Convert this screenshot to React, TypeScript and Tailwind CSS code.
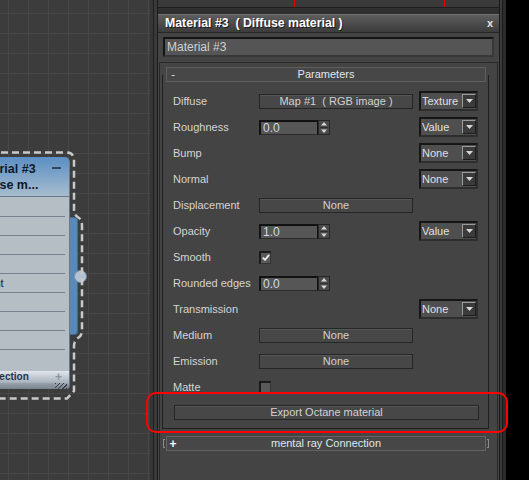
import React from 'react';

type RowDef = {
  label: string;
  control?: React.ReactNode;
  drop?: string;
};

const Btn: React.FC<{ label: string }> = ({ label }) => (
  <div className="flex h-[15px] w-[154px] items-center justify-center border border-[#262626] bg-[#474747] text-[11px] text-[#d2d2d2] shadow-[inset_0_1px_0_#575757]">
    <span className="whitespace-pre">{label}</span>
  </div>
);

const Spinner: React.FC<{ value: string }> = ({ value }) => (
  <div className="flex h-[15px] items-stretch">
    <div className="flex w-[59px] items-center border-l-2 border-t-2 border-r border-b border-[#121212] border-b-[#2c2c2c] bg-[#565656] pl-[2px] text-[12px] leading-none text-[#cfdae8]">
      {value}
    </div>
    <div className="flex w-[12px] flex-col items-center justify-center gap-[1px] border border-[#262626] bg-[#4a4a4a]">
      <svg width="6" height="4" viewBox="0 0 6 4">
        <polygon points="0,3.5 6,3.5 3,0" fill="#d8d8d8" />
      </svg>
      <div className="h-px w-[8px] bg-[#303030]" />
      <svg width="6" height="4" viewBox="0 0 6 4">
        <polygon points="0,0.5 6,0.5 3,4" fill="#d8d8d8" />
      </svg>
    </div>
  </div>
);

const Check: React.FC<{ on?: boolean }> = ({ on }) => (
  <div className="flex h-[13px] w-[12px] items-center justify-center border-l-2 border-t-2 border-r border-b border-[#1a1a1a] border-r-[#333333] border-b-[#333333] bg-[#5a5a5a]">
    {on && (
      <svg width="8" height="7" viewBox="0 0 8 7">
        <path d="M0.8 3.6 L3 5.8 L7.2 0.9" stroke="#ececec" strokeWidth="1.8" fill="none" />
      </svg>
    )}
  </div>
);

const Drop: React.FC<{ label: string }> = ({ label }) => (
  <div className="flex h-[20px] w-[59px] items-center border-2 border-[#161616] border-b-[#2e2e2e] border-r-[#2e2e2e] bg-[#4f4f4f] pl-[1px]">
    <span className="flex-1 text-[11px] leading-none text-[#e0e0e0]">{label}</span>
    <div className="flex h-[14px] w-[14px] items-center justify-center border border-[#9a9a9a] border-b-[#1e1e1e] border-r-[#1e1e1e] bg-[#3b3b3b]">
      <svg width="7" height="4" viewBox="0 0 7 4">
        <polygon points="0,0 7,0 3.5,4" fill="#d6d6d6" />
      </svg>
    </div>
  </div>
);

const rows: RowDef[] = [
  { label: 'Diffuse', control: <Btn label="Map #1  ( RGB image )" />, drop: 'Texture' },
  { label: 'Roughness', control: <Spinner value="0.0" />, drop: 'Value' },
  { label: 'Bump', drop: 'None' },
  { label: 'Normal', drop: 'None' },
  { label: 'Displacement', control: <Btn label="None" /> },
  { label: 'Opacity', control: <Spinner value="1.0" />, drop: 'Value' },
  { label: 'Smooth', control: <Check on /> },
  { label: 'Rounded edges', control: <Spinner value="0.0" /> },
  { label: 'Transmission', drop: 'None' },
  { label: 'Medium', control: <Btn label="None" /> },
  { label: 'Emission', control: <Btn label="None" /> },
  { label: 'Matte', control: <Check /> },
];

// slots of the node; only the end of the longest one shows past the left edge
const nodeSlots = ['Diffuse', 'Roughness', 'Bump', 'Normal', 'Displacement', 'Opacity', 'Smooth', 'Medium', 'Emission'];

function Canvas() {
  return (
    <div className="relative h-full w-[150px] shrink-0 overflow-hidden bg-[#3c3c3c] [background-image:linear-gradient(to_right,#474747_1px,transparent_1px),linear-gradient(to_bottom,#474747_1px,transparent_1px)] [background-position:8px_13px] [background-size:20px_20px]">
      {/* material node, cut off by the left edge */}
      <div className="absolute left-[-80px] top-[157px] w-[150px]">
        <div className="flex h-[40px] items-start justify-between rounded-tr-[5px] border-b border-r border-[#6a7a8a] bg-gradient-to-b from-[#5b8fc2] to-[#a7bccf] pl-[51px] pr-[8px] pt-[4px]">
          <div className="text-[12.5px] font-bold leading-[16px] text-[#0d1b2a]">
            <div>Material #3</div>
            <div>Diffuse m...</div>
          </div>
          <div className="mt-[6px] h-[2px] w-[9px] bg-[#2b4867]" />
        </div>
        <div className="border-r border-[#6a7a8a] bg-[#b5bdc5] pb-[2px] pt-[1px]">
          {nodeSlots.map((s, i) => (
            <div key={s} className="h-[19px] pr-[4px]">
              <div
                className={
                  i < nodeSlots.length - 1
                    ? 'flex h-full items-center border-b border-[#76818d] pl-[17px] text-[11px] text-[#1a1a1a]'
                    : 'flex h-full items-center pl-[17px] text-[11px] text-[#1a1a1a]'
                }
              >
                {s}
              </div>
            </div>
          ))}
        </div>
        <div className="flex h-[12px] items-center justify-between border-r border-[#6a7a8a] bg-gradient-to-b from-[#e1e6eb] to-[#a6b0ba] pl-[1px] pr-[7px]">
          <span className="text-[10px] font-bold leading-none text-[#1b3553]">mental ray Connection</span>
          <span className="text-[12px] font-bold leading-none text-[#8c96a0]">+</span>
        </div>
        <div className="flex h-[6px] justify-end rounded-br-[4px] border-r border-[#6a7a8a] bg-gradient-to-b from-[#98a2ac] to-[#7a8490] pr-[2px]">
          <div className="w-[12px] [background-image:repeating-linear-gradient(135deg,#3a3f45_0_1px,transparent_1px_3px)]" />
        </div>
      </div>
      <div className="absolute left-[70px] top-[217px] h-[118px] w-[8px] rounded-r-[4px] border border-l-0 border-[#3f6a92] bg-[#5889b7]" />
      <div className="absolute left-[74px] top-[270px] h-[13px] w-[13px] rounded-full border border-[#7a8ea3] bg-[#b2c2d2]" />
      <svg className="absolute left-0 top-0" width="150" height="480">
        <path
          d="M -10 152.5 H 66 Q 74 152.5 74 160 V 210 Q 74 215 79 218 Q 82 220 82 226 V 330 Q 82 336 78 338 Q 74 341 74 346 V 391 L 67 398.5 H -10"
          stroke="#c9c9c9"
          strokeWidth="2.5"
          strokeDasharray="7 4"
          fill="none"
        />
      </svg>
    </div>
  );
}

function Panel() {
  return (
    <div className="flex h-full w-[342px] shrink-0 flex-col border-l border-[#1b1b1b] bg-[#444444]">
      <div className="flex h-[8px] shrink-0 border-b border-[#1e1e1e] bg-[#3a3a3a]">
        <div className="w-[136px]" />
        <div className="w-px bg-[#e00000]" />
        <div className="w-[149px]" />
        <div className="w-px bg-[#e00000]" />
      </div>
      <div className="h-[6px] shrink-0 bg-[#2f2f2f]" />
      <div className="flex h-[19px] shrink-0 items-center justify-between border-y border-t-[#6e6e6e] border-b-[#262626] bg-gradient-to-b from-[#5d5d5d] to-[#3c3c3c] pl-[7px] pr-[6px]">
        <span className="whitespace-pre text-[12.3px] font-bold leading-none text-white [text-shadow:1px_1px_0_#1a1a1a]">
          Material #3  ( Diffuse material )
        </span>
        <span className="text-[11px] font-bold leading-none text-[#e4e4e4]">x</span>
      </div>
      <div className="mx-[5px] mt-[4px] flex h-[20px] shrink-0 items-center border-2 border-[#151515] border-b-[#383838] border-r-[#383838] bg-[#555555] pl-[2px] text-[12px] text-[#d0d0d0]">
        Material #3
      </div>
      <div className="mx-[1px] mt-[5px] flex-1 border-x border-t border-[#2a2a2a] pt-[4px]">
        <div className="relative z-10 ml-[6px] grid h-[15px] w-[320px] grid-cols-[12px_1fr_12px] items-center border border-[#5f5f5f] bg-[#474747] text-[11px] leading-none text-[#dfe6ee]">
          <span className="text-center">-</span>
          <span className="text-center">Parameters</span>
          <span />
        </div>
        <div className="-mt-[7px] ml-[2px] w-[327px] border-x border-b border-[#202020] pb-[8px] pt-[13px]">
          {rows.map((r) => (
            <div key={r.label} className="flex h-[26px] items-center pl-[10px]">
              <div className="w-[86px] shrink-0 text-[11px] text-[#d4d4d4]">{r.label}</div>
              <div className="w-[160px] shrink-0">{r.control}</div>
              {r.drop && <Drop label={r.drop} />}
            </div>
          ))}
          <div className="ml-[11px] mt-[5px] flex h-[15px] w-[305px] items-center justify-center border border-[#262626] bg-[#474747] text-[11px] text-[#d2d2d2] shadow-[inset_0_1px_0_#575757]">
            Export Octane material
          </div>
        </div>
        <div className="mt-[7px] flex items-center">
          <div className="ml-[3px] h-[9px] w-[2px] border-y border-l border-[#8a8a8a]" />
          <div className="ml-px grid h-[15px] w-[320px] grid-cols-[12px_1fr_12px] items-center border border-[#646464] bg-[#474747] text-[11px] leading-none text-[#dfe6ee]">
            <span className="text-center text-[12px] font-bold text-white">+</span>
            <span className="text-center">mental ray Connection</span>
            <span />
          </div>
          <div className="ml-px h-[9px] w-[2px] border-y border-r border-[#8a8a8a]" />
        </div>
      </div>
    </div>
  );
}

export default function App() {
  return (
    <div className="relative flex h-[480px] w-[529px] overflow-hidden bg-black font-['Liberation_Sans',Arial,sans-serif]">
      <Canvas />
      <div className="w-[3px] shrink-0 bg-[#363636]" />
      <div className="w-px shrink-0 bg-[#1f1f1f]" />
      <div className="w-[3px] shrink-0 bg-[#3a3a3a]" />
      <Panel />
      <div className="w-px shrink-0 bg-[#1a1a1a]" />
      <div className="w-[2px] shrink-0 bg-[#3a3a3a]" />
      <div className="w-px shrink-0 bg-[#1a1a1a]" />
      <div className="w-[3px] shrink-0 bg-[#2c2c2c]" />
      <div className="flex-1 bg-black" />
      <div className="pointer-events-none absolute left-[146px] top-[392px] h-[41px] w-[362px] rounded-[10px] border-2 border-[#ff0000]" />
    </div>
  );
}
